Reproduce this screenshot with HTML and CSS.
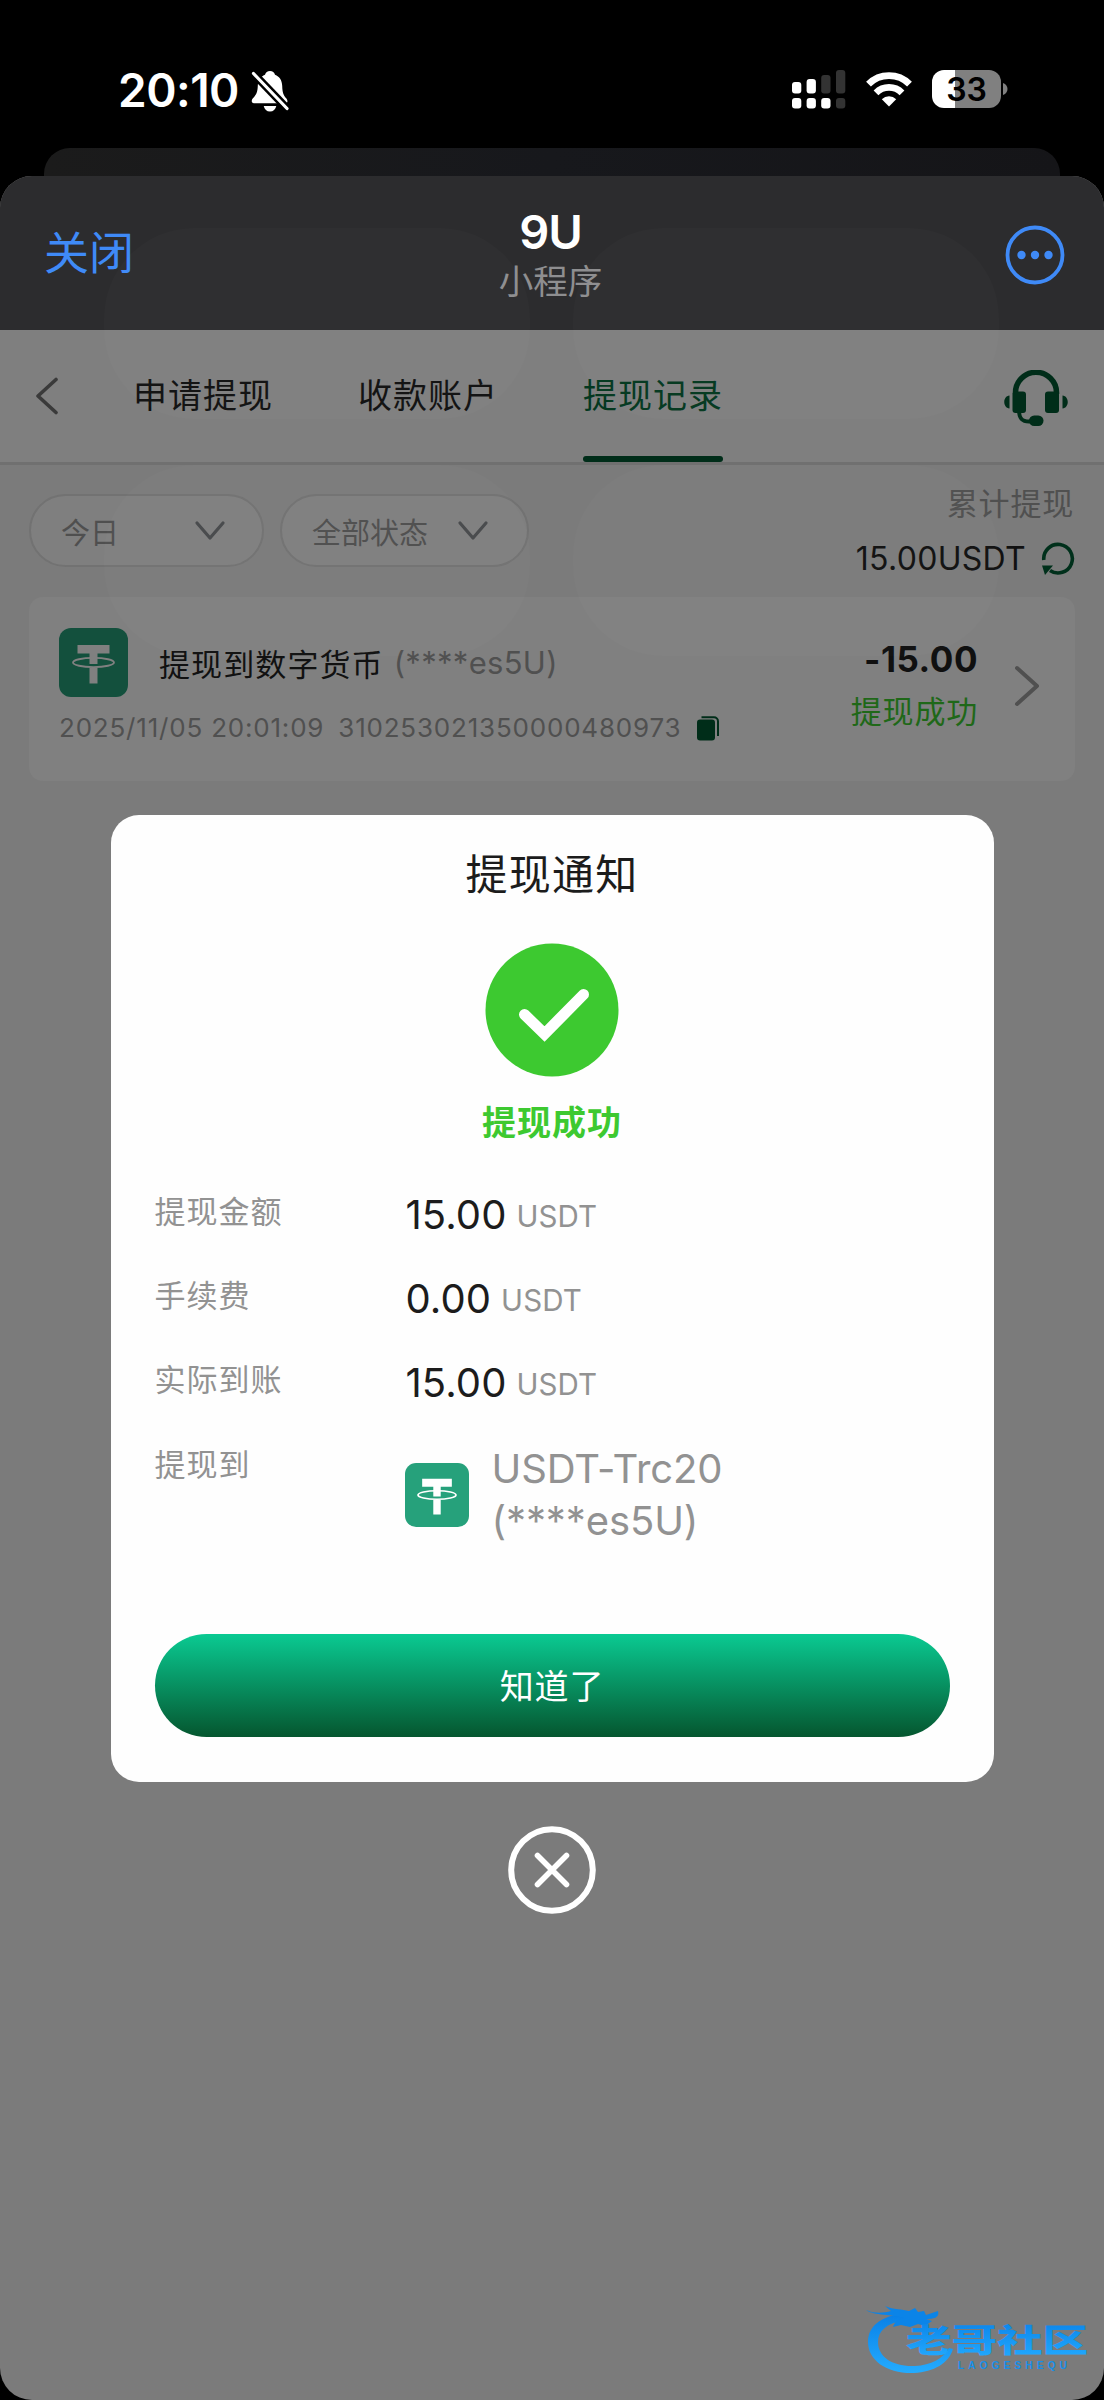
FILE: index.html
```html
<!DOCTYPE html>
<html lang="zh-CN">
<head>
<meta charset="utf-8">
<title>提现记录</title>
<link rel="stylesheet" href="styles.css">
</head>
<body>
<svg width="0" height="0" class="defs">
  <symbol id="tether" viewBox="0 0 69 69">
    <rect width="69" height="69" rx="12" class="coin-bg"/>
    <ellipse cx="34.5" cy="34.5" rx="20.5" ry="4.6" fill="none" class="coin-ring"/>
    <path d="M18.5 17h32v8.500H38.500V36h-8V25.500h-12zM30.500 39.500h8v16h-8z" class="coin-t"/>
  </symbol>
</svg>
<div class="phone">
  <header class="status">
    <div class="status-left">
      <span class="time">20:10</span>
      <svg class="bell" width="38" height="42" viewBox="0 0 38 42">
        <path d="M19 1c2.500 0 4.500 1.500 5 3.700 4.500 1.800 7 5.500 7.200 11 .2 7 1.300 9.500 4 12.500 1.500 1.700 2 4.800-.5 5H3c-2.500 0-2.800-2.800-1.500-4.500 3.300-3.500 5-5.700 5.300-13 .2-5.500 2.700-9.200 7.200-11C14.500 2.500 16.500 1 19 1zM12.700 36h12.600c-.8 3.500-3 5.500-6.300 5.500S13.500 39.500 12.700 36z" fill="#fff"/>
        <path d="M2.500 3.500 36 38.500" stroke="#000" stroke-width="8"/>
        <path d="M2.500 3.500 36 38.500" stroke="#fff" stroke-width="3.200" stroke-linecap="round"/>
      </svg>
    </div>
    <div class="status-right">
      <svg width="54" height="39" viewBox="0 0 54 39">
        <g fill="#fff"><rect y="12" width="9.300" height="11.500" rx="3"/><rect x="14.600" y="9" width="9.300" height="14.500" rx="3"/><rect y="28" width="9.300" height="10.500" rx="3"/><rect x="14.600" y="28" width="9.300" height="10.500" rx="3"/><rect x="29.200" y="28" width="9.300" height="10.500" rx="3"/></g>
        <g fill="#333"><rect x="29.200" y="5" width="9.300" height="18.500" rx="3"/><rect x="44" y="0" width="9.300" height="23.500" rx="3"/><rect x="44" y="28" width="9.300" height="10.500" rx="3"/></g>
      </svg>
      <svg class="wifi" width="48" height="36" viewBox="0 0 48 36">
        <g fill="none" stroke="#fff" stroke-width="6.800"><path d="M3.500 13.200a29 29 0 0 1 41 0"/><path d="M11 21.800a18.500 18.500 0 0 1 26 0"/></g>
        <path d="M24 35.500 16.800 28.200a10.300 10.300 0 0 1 14.400 0z" fill="#fff"/>
      </svg>
      <div class="battery"><span>33</span></div>
      <svg width="5" height="12" viewBox="0 0 5 12"><path d="M0 0c6 2 6 10 0 12z" fill="#808080"/></svg>
    </div>
  </header>
  <div class="back-sheet"></div>
  <main class="sheet">
    <div class="titlebar">
      <span class="close-link">关闭</span>
      <div class="titles"><b>9U</b><small>小程序</small></div>
      <svg class="more" width="60" height="60" viewBox="0 0 60 60"><circle cx="30" cy="30" r="27.500" fill="none" stroke="#3f8af7" stroke-width="3.800"/><g fill="#3f8af7"><circle cx="16.500" cy="30" r="4.200"/><circle cx="30" cy="30" r="4.200"/><circle cx="43.500" cy="30" r="4.200"/></g></svg>
    </div>
    <nav class="tabs">
      <svg class="back" width="24" height="38" viewBox="0 0 24 38"><path d="M21 2.500 3 19l18 16.500" fill="none" stroke="#3a3a3a" stroke-width="3.600" stroke-linecap="round" stroke-linejoin="round"/></svg>
      <span class="tab">申请提现</span>
      <span class="tab">收款账户</span>
      <span class="tab active">提现记录</span>
      <svg class="service" width="64" height="58" viewBox="0 0 64 58">
        <path d="M11.500 24v-1.500a20 19.700 0 0 1 41 0V24" fill="none" stroke="#002d19" stroke-width="5.500"/>
        <path d="M15 40c0 8 2.500 11.500 10 11.500h5" fill="none" stroke="#002d19" stroke-width="4"/>
        <g fill="#002d19"><rect x="8.500" y="21.500" width="13.500" height="21.500" rx="3"/><rect x="41" y="21.500" width="14" height="21.500" rx="3"/><rect x="25" y="45.500" width="14.500" height="10.500" rx="5.200"/><path d="M5.500 25.500v13C-1.500 38-1.500 26 5.500 25.500zM58.500 25.500v13c7-.5 7-12.500 0-13z"/></g>
      </svg>
    </nav>
    <section class="filters">
      <div class="chip day"><span>今日</span><svg width="32" height="22" viewBox="0 0 32 22"><path d="m3 3 13 15L29 3" fill="none" stroke="#484a4c" stroke-width="3.200" stroke-linecap="round" stroke-linejoin="round"/></svg></div>
      <div class="chip state"><span>全部状态</span><svg width="32" height="22" viewBox="0 0 32 22"><path d="m3 3 13 15L29 3" fill="none" stroke="#484a4c" stroke-width="3.200" stroke-linecap="round" stroke-linejoin="round"/></svg></div>
      <div class="total">
        <span class="total-label">累计提现</span>
        <div class="total-row"><span>15.00USDT</span><svg width="34" height="34" viewBox="0 0 34 34"><path d="M2.800 18A14.300 14.300 0 1 1 9 28.500" fill="none" stroke="#00301b" stroke-width="3.600"/><path d="M1 23.500h11L4 33z" fill="#00301b"/></svg></div>
      </div>
    </section>
    <article class="record">
      <div class="record-main">
        <div class="record-title"><svg class="coin dim" width="69" height="69"><use href="#tether"/></svg><span class="name">提现到数字货币</span><span class="acct">(****es5U)</span></div>
        <div class="record-meta"><span>2025/11/05 20:01:09</span><span class="order">310253021350000480973</span>
          <svg width="23" height="25" viewBox="0 0 23 25"><rect y="3.500" width="18" height="21" rx="3" fill="#002d19"/><path d="M4.500 1.200H17a4 4 0 0 1 4 4V20" fill="none" stroke="#002d19" stroke-width="2"/></svg></div>
      </div>
      <div class="record-sum"><b>-15.00</b><span>提现成功</span></div>
      <svg class="go" width="26" height="42" viewBox="0 0 26 42"><path d="m3 3 20 18L3 39" fill="none" stroke="#505050" stroke-width="4" stroke-linecap="round" stroke-linejoin="round"/></svg>
    </article>
    <svg class="brand" width="226" height="72" viewBox="0 0 226 72">
      <defs><linearGradient id="blue" x1="0" y1="0" x2="0" y2="1"><stop offset="0" stop-color="#087fe6"/><stop offset="1" stop-color="#24acff"/></linearGradient></defs>
      <path d="M45 7C17 8 2 19 2 36c0 19 20 32 46 31 20-1 35-10 39-24l-4-1C77 53 65 59 49 60 27 61 12 51 12 36c0-11 9-19 25-21z" fill="url(#blue)"/>
      <path d="M0 4c9 4 18 3 25 1l-6-5c9 4 17 3 24 5l6-3 3 4 6-1 2 4 12-4c2 7-5 8-12 8l6 2-7 5-7-2-8 3-9-2-8 2c2-6 6-8 11-9C27 8 8 10 0 4z" fill="#0b84e8"/>
      <text x="40" y="46" class="brand-name" textLength="182" lengthAdjust="spacingAndGlyphs" fill="url(#blue)">老哥社区</text>
      <text x="92" y="63" class="brand-sub" textLength="109">LAOGESHEQU</text>
    </svg>
    <div class="ghost g1"></div><div class="ghost g2"></div><div class="ghost g3"></div><div class="ghost g4"></div>
  </main>
  <div class="overlay">
    <section class="dialog">
      <h2>提现通知</h2>
      <svg class="ok" width="134" height="134" viewBox="0 0 134 134"><circle cx="67" cy="67" r="66.500" fill="#3dc930"/><path d="m39.500 71.500 20 19.500 39-39.500" fill="none" stroke="#fff" stroke-width="11" stroke-linecap="round"/></svg>
      <p class="result">提现成功</p>
      <div class="rows">
        <div class="row"><span class="label">提现金额</span><span class="value">15.00<i>USDT</i></span></div>
        <div class="row"><span class="label">手续费</span><span class="value">0.00<i>USDT</i></span></div>
        <div class="row"><span class="label">实际到账</span><span class="value">15.00<i>USDT</i></span></div>
        <div class="row dest"><span class="label">提现到</span><svg class="coin" width="64" height="64"><use href="#tether"/></svg><span class="target">USDT-Trc20<br>(****es5U)</span></div>
      </div>
      <button class="confirm">知道了</button>
    </section>
    <svg class="dismiss" width="88" height="88" viewBox="0 0 88 88"><g fill="none" stroke="#fff"><circle cx="44" cy="44" r="40.800" stroke-width="6"/><path d="m29.500 29.500 29 29m0-29-29 29" stroke-width="5.600" stroke-linecap="round"/></g></svg>
  </div>
</div>
</body>
</html>
```
FILE: styles.css
```css
* { box-sizing: border-box; margin: 0; padding: 0; }
body { background: #000; font-family: Inter, "Noto Sans CJK SC", sans-serif; }
svg { display: block; flex: none; }
.defs { position: absolute; }
span, b, small, h2, p { white-space: nowrap; }
.phone { position: relative; width: 1104px; height: 2400px; display: flex; flex-direction: column; overflow: hidden; background: #000; }

.status { height: 148px; padding: 70px 96px 0 118px; display: flex; justify-content: space-between; color: #fff; }
.status-left, .status-right { display: flex; align-items: flex-start; }
.time { font-size: 46px; font-weight: 600; line-height: 40px; width: 133px; letter-spacing: -.5px; }
.wifi { margin: 1px 19px 0 19px; }
.status-right > svg:last-child { margin: 13px 0 0 2px; }
.battery { width: 69px; height: 38px; border-radius: 12px; background: linear-gradient(90deg, #fff 34%, #808080 34%); color: #000; font-size: 32px; font-weight: 600; line-height: 39px; text-align: center; }

.back-sheet { height: 28px; margin: 0 44px; border-radius: 26px 26px 0 0; background: linear-gradient(90deg, #1b1b1b, #17181c 50%, #151518); }
.sheet { flex: 1; position: relative; display: flex; flex-direction: column; background: #7b7b7b; border-radius: 32px; overflow: hidden; }
.titlebar { height: 153.500px; flex: none; background: #2c2c2e; padding: 0 39px 0 44px; display: grid; grid-template-columns: 1fr auto 1fr; align-items: start; }
.close-link { color: #3f8af7; font-size: 45px; line-height: 60px; margin-top: 48px; }
.titles { display: flex; flex-direction: column; align-items: center; padding-top: 31px; margin-right: 8px; }
.titles b { color: #fff; font-size: 47px; font-weight: 600; line-height: 50px; letter-spacing: -1px; }
.titles small { color: #8e8e90; font-size: 34.500px; line-height: 50px; font-weight: 400; }
.more { margin-top: 49px; justify-self: end; }

.tabs { height: 135.500px; flex: none; background: #7f7f7f; border-bottom: 3px solid #707070; display: flex; padding: 0 36px 0 35px; }
.back { margin: 47px 74px 0 0; }
.tab { font-size: 34px; letter-spacing: 1px; line-height: 131px; height: 132.500px; width: 140px; margin-right: 85px; color: #111; position: relative; }
.tab.active { color: #04381f; margin-right: auto; }
.tab.active::after { content: ""; position: absolute; left: 0; right: 0; bottom: 0; height: 6px; border-radius: 3px; background: #002d19; }
.service { margin-top: 40px; }

.filters { height: 132px; flex: none; padding: 0 29px; display: flex; }
.chip { height: 73px; margin-top: 29px; border: 2px solid #727272; border-radius: 37px; background: #7f7f7f; display: flex; align-items: center; justify-content: space-between; color: #4f4f4f; font-size: 29px; }
.day { width: 235px; padding: 0 36px 0 30px; margin-right: 16px; }
.state { width: 249px; padding: 0 38px 0 30px; }
.total { margin-left: auto; padding-top: 18px; display: flex; flex-direction: column; align-items: flex-end; }
.total-label { font-size: 31px; letter-spacing: .8px; line-height: 42px; color: #505050; margin-right: 1px; }
.total-row { display: flex; align-items: center; gap: 15px; margin-top: 17px; color: #111; font-size: 32px; line-height: 34px; letter-spacing: .3px; }

.record { height: 184px; flex: none; margin: 0 29px; border-radius: 14px; background: #808080; display: flex; padding: 31px 35px 0 30px; }
.record-title { display: flex; align-items: center; }
.name { font-size: 31px; letter-spacing: 1.1px; margin-left: 31px; color: #111; }
.acct { font-size: 31px; letter-spacing: .3px; margin-left: 10px; color: #505050; }
.record-meta { display: flex; align-items: center; margin-top: 15px; font-size: 26px; line-height: 32px; letter-spacing: .8px; color: #505050; }
.order { margin: 0 16px 0 14px; }
.record-sum { margin-left: auto; display: flex; flex-direction: column; align-items: flex-end; }
.record-sum b { font-size: 35px; line-height: 44px; margin-top: 9px; color: #101010; letter-spacing: .5px; }
.record-sum span { font-size: 31px; letter-spacing: .8px; line-height: 50px; margin-top: 6px; color: #1f6818; }
.go { margin: 37px 0 0 36px; }
.coin { --bg: #26a17b; --ink: #fff; }
.coin.dim { --bg: #13503d; --ink: #808080; }
.coin-bg { fill: var(--bg); }
.coin-t { fill: var(--ink); }
.coin-ring { stroke: var(--ink); stroke-width: 1.800; }

.brand { position: absolute; left: 866px; bottom: 22px; }
.brand-name { font: 900 32px "Noto Sans CJK SC", sans-serif; }
.brand-sub { font: 700 10px "Liberation Sans", sans-serif; fill: #168fe9; }
.ghost { position: absolute; width: 426px; height: 191px; border-radius: 90px; background: rgba(255,255,255,.014); pointer-events: none; }
.g1 { left: 104px; top: 52px; }
.g2 { left: 573px; top: 52px; }
.g3 { left: 104px; top: 289px; }
.g4 { left: 573px; top: 289px; }

.overlay { position: absolute; inset: 0; display: flex; flex-direction: column; align-items: center; padding-top: 815px; }
.dialog { width: 883px; height: 967px; border-radius: 28px; background: #fefefe; padding: 29px 44px 0; display: flex; flex-direction: column; align-items: center; }
h2 { font-size: 42px; font-weight: 400; letter-spacing: 1.2px; line-height: 62px; color: #1c1c1c; }
.ok { margin-top: 37px; }
.result { font-size: 34px; letter-spacing: 1px; font-weight: 700; line-height: 50px; margin-top: 21px; color: #3dc930; }
.rows { align-self: stretch; height: 486px; padding-top: 21px; }
.row { height: 84.200px; display: flex; line-height: 84px; }
.label { width: 251px; font-size: 31px; letter-spacing: 1px; color: #929292; padding-top: 1px; }
.value { padding-top: 4px; font-size: 40px; color: #1c1c1c; letter-spacing: .1px; }
.value i { font-style: normal; font-size: 29.500px; color: #929292; margin-left: 10px; vertical-align: 2px; }
.dest .coin { margin-top: 41px; }
.dest .label { width: 250px; }
.target { margin: 21px 0 0 23px; font-size: 40px; line-height: 52px; height: 104px; color: #929292; letter-spacing: -.1px; }
.confirm { width: 795px; height: 103px; flex: none; border: 0; border-radius: 52px; background: linear-gradient(#0aca92, #05562f); color: #fff; font: 400 34px/103px Inter, "Noto Sans CJK SC", sans-serif; letter-spacing: .8px; padding-top: 1px; }
.dismiss { margin-top: 44px; }
```
